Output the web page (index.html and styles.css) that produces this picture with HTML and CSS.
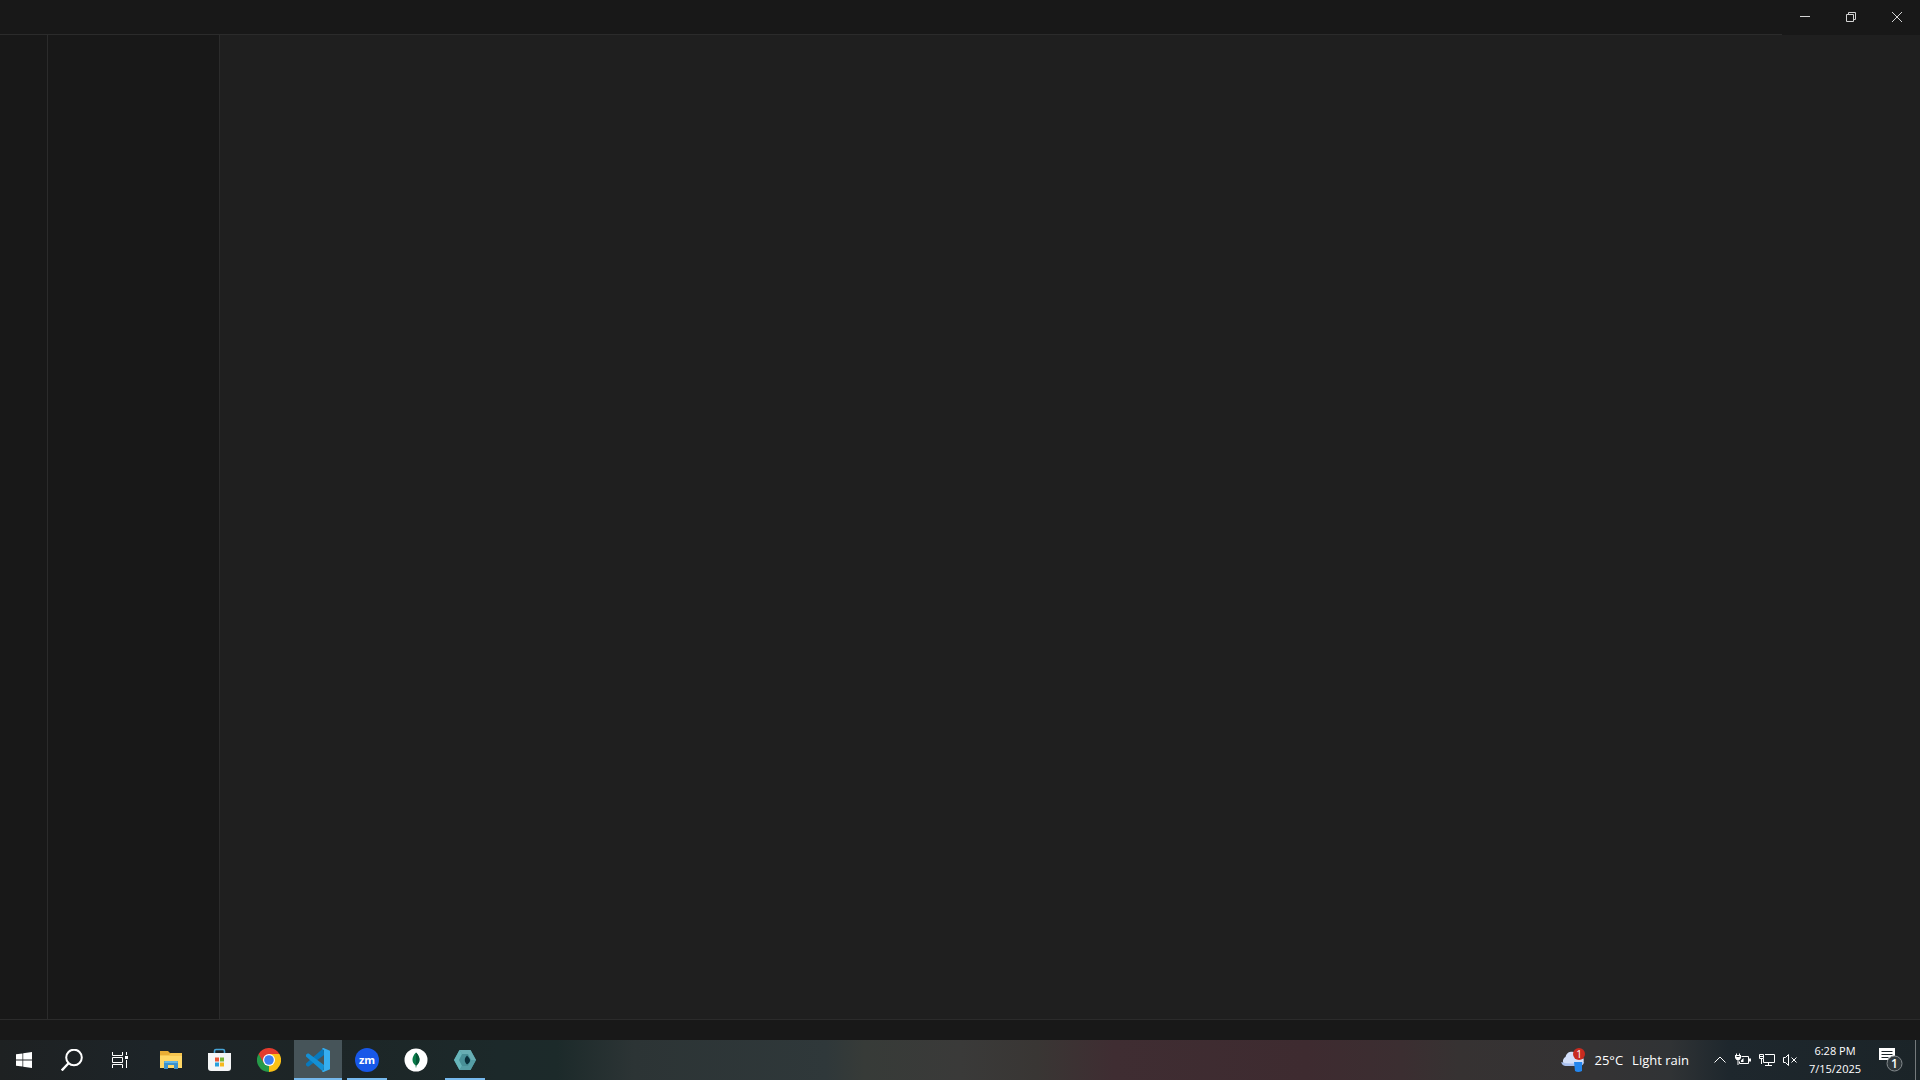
FILE: index.html
```html
<!DOCTYPE html>
<html lang="en">
<head>
<meta charset="utf-8">
<title>Desktop</title>
<link rel="stylesheet" href="styles.css">
</head>
<body>
<div class="window">
  <header class="titlebar">
    <div class="drag-region"></div>
    <div class="window-controls">
      <button class="control" aria-label="Minimize"><svg width="10" height="10" viewBox="0 0 10 10"><path d="M0 4.5h10" class="line"/></svg></button>
      <button class="control" aria-label="Restore"><svg width="10" height="10" viewBox="0 0 10 10"><path d="M.5 2.5h7v7h-7zM2.500 2.500v-2h7v7h-2" class="line"/></svg></button>
      <button class="control" aria-label="Close"><svg width="10" height="10" viewBox="0 0 10 10"><path d="M0 0l10 10M10 0L0 10" class="line"/></svg></button>
    </div>
  </header>
  <div class="workbench">
    <nav class="activity-bar"></nav>
    <aside class="sidebar"></aside>
    <main class="editor"></main>
  </div>
  <footer class="statusbar"></footer>
</div>

<div class="taskbar">
  <div class="system">
    <button class="task" aria-label="Start"><svg width="16" height="16" viewBox="0 0 16 16" fill="#fff"><path d="M0 2.300l6.500-.9v6.200H0zM7.200 1.300L16 0v7.600H7.200zM0 8.400h6.500v6.200L0 13.700zM7.200 8.400H16V16l-8.800-1.300z"/></svg></button>
    <button class="task" aria-label="Search"><svg width="22" height="22" viewBox="0 0 22 22" fill="none" stroke="#fff" stroke-width="2"><circle cx="13" cy="8.500" r="7.800"/><path d="M7.700 14L.7 21.500" stroke-width="2.400"/></svg></button>
    <button class="task" aria-label="Task view"><svg width="16" height="16" viewBox="0 0 16 16" fill="none" stroke="#fff"><path d="M.5 0v3.500h10V0M.5 16v-3.500h10V16M.5 5.500h10v5H.5zM14.500 0v3M14.500 8v8"/><path d="M13 4h3v3h-3z" fill="#fff" stroke="none"/></svg></button>
  </div>
  <div class="apps">
    <button class="task" aria-label="File Explorer"><svg width="22" height="20" viewBox="0 0 22 20"><path d="M0 1h8l2 2h12v15H0z" fill="#e9ad35"/><path d="M0 5h22v13H0z" fill="#ffd766"/><path d="M0 5h9l2-2h11v3H0z" fill="#f7c650"/><path d="M4 19v-7q0-1 1-1h12q1 0 1 1v7h-4v-4H8v4z" fill="#3b91cc"/><path d="M5 11h12l1 2H4z" fill="#62b6e6"/></svg></button>
    <button class="task" aria-label="Microsoft Store"><svg width="24" height="24" viewBox="0 0 24 24"><path d="M6.500 6V3q0-1.500 1.500-1.500h7q1.500 0 1.500 1.500v3" fill="none" stroke="#47a5d8" stroke-width="1.600"/><path d="M0 5h23v15q0 3-3 3H3q-3 0-3-3z" fill="#f5f6f7"/><path d="M7 9.500h4v4H7z" fill="#eb5535"/><path d="M12 9.500h4v4h-4z" fill="#79b637"/><path d="M7 14.500h4v4H7z" fill="#2aa0dd"/><path d="M12 14.500h4v4h-4z" fill="#f6b91d"/></svg></button>
    <button class="task" aria-label="Google Chrome"><svg width="24" height="24" viewBox="0 0 24 24"><path d="M12 12L1.600 6A12 12 0 0 1 22.400 6z" fill="#e33b2e"/><path d="M12 12L22.400 6A12 12 0 0 1 12 24z" fill="#fbc116"/><path d="M12 12v12A12 12 0 0 1 1.600 6z" fill="#269a49"/><path d="M12 6h10.400l-5.200 9L12 24l5.200-9z" fill="#fbc116"/><path d="M1.600 6l5.200 9 5.200 3V12z" fill="#269a49"/><path d="M1.600 6h20.800H12L6.800 15z" fill="#e33b2e"/><circle cx="12" cy="12" r="6" fill="#fff"/><circle cx="12" cy="12" r="4.800" fill="#3d7ff0"/></svg></button>
    <button class="task task-active" aria-label="Visual Studio Code"><svg width="24" height="24" viewBox="0 0 24 24"><path d="M17.500 0L0 15.600v1.600l1.500 1.300h1.200L18 7z" fill="#0879bd"/><path d="M17.500 24L0 8.400V6.800l1.500-1.300h1.200L18 17z" fill="#1490d5"/><path d="M17.500 0L24 2.800v18.400L17.500 24q-1 .1-1.500-1l2-1V2l-2-1q.5-1 1.500-1z" fill="#36aef0"/></svg></button>
    <button class="task task-open" aria-label="Zoom"><svg width="24" height="24" viewBox="0 0 24 24"><circle cx="12" cy="12" r="12" fill="#1858e8"/><text x="12" y="16" class="zoom-mark">zm</text></svg></button>
    <button class="task" aria-label="MongoDB"><svg width="24" height="24" viewBox="0 0 24 24"><circle cx="12" cy="12" r="11.500" fill="#fff"/><path d="M12 4.500c5 5 4.200 10 .4 13l-.1 2h-.6l-.1-2C7.800 14.500 7 9.500 12 4.500z" fill="#087a48"/><path d="M12 4.500c5 5 4.200 10 .4 13H12z" fill="#075638"/></svg></button>
    <button class="task task-open" aria-label="MongoDB Compass"><svg width="24" height="24" viewBox="0 0 24 24"><path d="M6.500 2h11L23 12l-5.500 10h-11L1 12z" fill="#489098"/><path d="M6.500 2h11L23 12h-5l-3-6H9z" fill="#68aeb4"/><path d="M1 12L6.500 2 9 6l-3 6 3 6-2.500 4z" fill="#67b5ba"/><path d="M18 12h5l-5.500 10h-11L9 18h6z" fill="#559da5"/><path d="M14 7.500c4 4 4 6 0 9-3-3-3-6 0-9z" fill="#082f3b"/></svg></button>
  </div>
  <div class="tray">
    <button class="weather">
      <svg width="24" height="24" viewBox="0 0 24 24"><path d="M5 18a5 5 0 0 1-.5-9A6.500 6.500 0 0 1 16.500 7 5.500 5.500 0 0 1 18 18z" fill="#d3dff9"/><path d="M5 18a5 5 0 0 1-4.800-4q8 3 23 0-1 4-4.700 4z" fill="#a9c0ef"/><path d="M13 14h8v9q-4 2-7 0z" fill="#2386ee"/><circle cx="18" cy="6" r="6" fill="#c92b20"/><text x="18" y="10" class="alert-count">1</text></svg>
      <span>25°C</span><span>Light rain</span>
    </button>
    <div class="status-icons">
      <button class="tray-icon" aria-label="Show hidden icons"><svg width="14" height="16" viewBox="0 0 14 16"><path d="M1.500 10.500L7 5l5.500 5.500" class="tray-line"/></svg></button>
      <button class="tray-icon" aria-label="Battery"><svg width="16" height="16" viewBox="0 0 16 16"><path d="M6.500 4.500h7v7h-9v-2M1.500 1.500v2M4.500 1.500v2M3 7v6" class="tray-line"/><path d="M0 3h6v3L4.500 8h-3L0 6zM14 6.500h2v3h-2zM6 10V8.500L8.500 6v4z" fill="#fff"/><path d="M1.500 4.500h3" stroke="#1e272d"/></svg></button>
      <button class="tray-icon" aria-label="Network"><svg width="16" height="16" viewBox="0 0 16 16"><path d="M6 2.500h9.500v8h-11V7M9.500 11v3M6 13.500h7M.5 2.500h4v4h-4zM2.500 7v5M1 4.500h3" class="tray-line"/></svg></button>
      <button class="tray-icon" aria-label="Volume muted"><svg width="16" height="16" viewBox="0 0 16 16"><path d="M.5 5.500h2l3-3v11l-3-3h-2zM8.500 5.500l5 5M13.500 5.500l-5 5" class="tray-line"/></svg></button>
    </div>
    <button class="clock"><time>6:28 PM</time><time>7/15/2025</time></button>
    <button class="notifications" aria-label="Notifications">
      <svg width="26" height="26" viewBox="0 0 26 26"><path d="M1 1h16v12h-4v4l-4-4H1z" fill="#fff"/><path d="M3.500 4.500h11M3.500 7.500h11M3.500 10.500h7" stroke="#1c2529"/><circle cx="16.500" cy="16.500" r="7.500" fill="#30383c" stroke="#858b8e"/><text x="16.500" y="21" class="notice-count">1</text></svg>
    </button>
    <button class="show-desktop" aria-label="Show desktop"></button>
  </div>
</div>
</body>
</html>
```
FILE: styles.css
```css
* { box-sizing: border-box; }
body {
  margin: 0;
  height: 100vh;
  display: flex;
  flex-direction: column;
  overflow: hidden;
  background: #181818;
  color: #fff;
  font-family: "Open Sans", "Noto Sans", sans-serif;
}
button {
  display: flex;
  align-items: center;
  justify-content: center;
  margin: 0;
  padding: 0;
  border: 0;
  background: none;
  color: inherit;
  font: inherit;
}
svg { display: block; flex: none; }

.window { flex: 1; display: flex; flex-direction: column; }
.titlebar { display: flex; height: 35px; background: #181818; }
.drag-region { flex: 1; border-bottom: 1px solid #2b2b2b; }
.window-controls { display: flex; }
.control { width: 46px; height: 34px; }
.line { fill: none; stroke: #d4d4d4; }
.workbench { flex: 1; display: flex; }
.activity-bar { width: 48px; border-right: 1px solid #2b2b2b; }
.sidebar { width: 172px; border-right: 1px solid #2b2b2b; }
.editor { flex: 1; background: #1f1f1f; }
.statusbar { height: 21px; border-top: 1px solid #2b2b2b; }

.taskbar {
  display: flex;
  justify-content: space-between;
  height: 40px;
  background: linear-gradient(90deg, #1e2122 0%, #1d2428 8%, #1d2526 16%, #1c292a 26%, #1c2a2a 29%, #2c3435 33%, #2f383a 43%, #373b38 45%, #3a3a39 50%, #393634 54%, #3f2d32 58%, #3e2b30 68%, #3b2e31 73%, #363232 76%, #343334 83%, #303335 87%, #1e272d 90%, #1b2428 100%);
}
.system, .apps, .tray, .status-icons { display: flex; }
.apps { flex: 1; gap: 1px; padding-left: 3px; }
.task { width: 48px; height: 40px; }
.task-active { background: #465459; border-bottom: 2px solid #76b9ed; padding-top: 2px; }
.task-open {
  background: linear-gradient(#76b9ed, #76b9ed) center bottom / 40px 2px no-repeat;
}
.zoom-mark { fill: #fff; font: 700 11px "Open Sans", sans-serif; text-anchor: middle; }
.alert-count { fill: #fff; font: 10px "Open Sans", sans-serif; text-anchor: middle; }
.notice-count { fill: #fff; font: 600 12px "Open Sans", sans-serif; text-anchor: middle; }

.weather { gap: 9px; margin-right: 24px; font-size: 13px; }
.status-icons { gap: 8px; }
.tray-line { fill: none; stroke: #fff; }
.clock {
  flex-direction: column;
  width: 72px;
  font-size: 11px;
  line-height: 18px;
}
.notifications { width: 44px; padding-right: 4px; }
.show-desktop { width: 5px; border-left: 1px solid #747a7c; }
```
